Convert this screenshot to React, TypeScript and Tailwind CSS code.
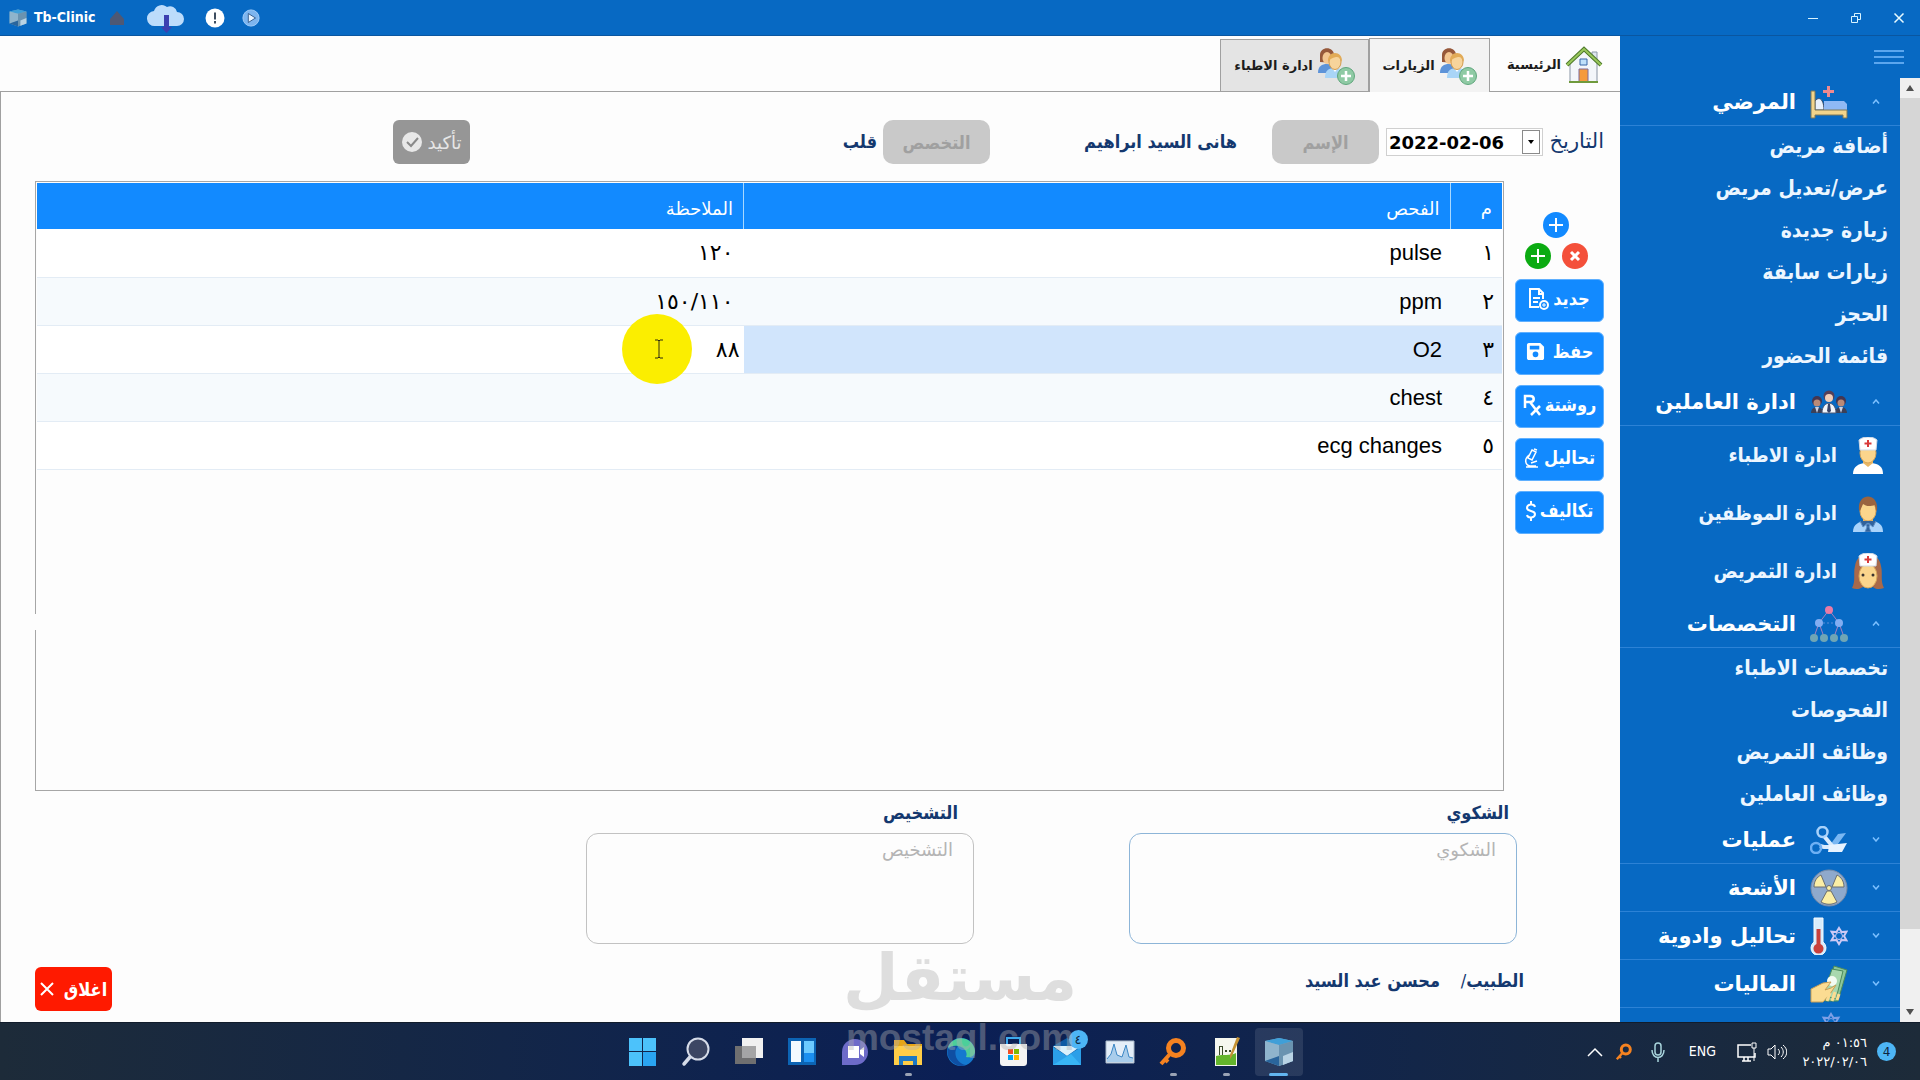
import React from "react";
import type { ReactNode } from "react";

const NARROW = "[font-family:'DejaVu_Sans_Condensed','DejaVu_Sans',sans-serif]";
const LABEL =
  "text-[18px] leading-7 font-bold text-[#14386f] whitespace-nowrap [font-family:'DejaVu_Sans_Condensed','DejaVu_Sans',sans-serif]";
const ACTION =
  "flex h-[43px] w-[89px] items-center justify-center gap-1 rounded-md border border-[#5fb0ff] bg-[#128aff] pb-1 text-[18px] font-bold text-white whitespace-nowrap [font-family:'DejaVu_Sans_Condensed','DejaVu_Sans',sans-serif]";

/* ---------- icons ---------- */

function CubeIcon({ className = "" }: { className?: string }) {
  return (
    <svg viewBox="0 0 30 30" className={className} aria-hidden="true">
      <path d="M1 4 15 1l14 3v20l-14 5-14-5z" fill="#6fa6c9" />
      <path d="M1 4 15 1l14 3-14 4z" fill="#3f9fd8" />
      <path d="M1 4 15 8v12L1 24z" fill="#8fb4cc" />
      <path d="M15 8 29 4v20l-14 5z" fill="#6a93b0" />
      <path d="m1 24 14-5v10z" fill="#2a659c" />
      <path d="m19 19 10-4v9l-10 4z" fill="#b9d3e4" />
    </svg>
  );
}

function CloudIcon() {
  return (
    <svg viewBox="0 0 38 32" className="h-8 w-[38px]" aria-hidden="true">
      <path d="M8 24a7.500 7.500 0 0 1-1-15A8 8 0 0 1 20 5a7 7 0 0 1 10 5 7 7 0 0 1 0 14z" fill="#bcdcfb" />
      <path d="M17 13h5v12h3l-5.500 6-5.500-6h3z" fill="#3c3fb0" />
    </svg>
  );
}

function HouseIcon() {
  return (
    <svg viewBox="0 0 38 38" className="size-[38px]" aria-hidden="true">
      <path d="M27 6h5v10h-5z" fill="#dfe6ef" stroke="#8c98a8" />
      <path d="M5 17 19 5l13 12v19H5z" fill="#f3f6fa" stroke="#8894a4" />
      <path d="m2 19 17-16 17 16" fill="none" stroke="#4f7a2c" strokeWidth="4" />
      <path d="m2 19 17-16 17 16" fill="none" stroke="#9ac85c" strokeWidth="2" />
      <path d="M15 13h7v6h-7z" fill="#bfe0fa" stroke="#3867a8" />
      <path d="M14 23h9v13h-9z" fill="#f59a3c" stroke="#7d6a9a" />
      <path d="M4 36h29" stroke="#6f9a3c" strokeWidth="2" />
    </svg>
  );
}

function UsersAddIcon() {
  return (
    <svg viewBox="0 0 38 38" className="size-[38px]" aria-hidden="true">
      <path d="M1 26c0-7 4-9 9-9s9 3 9 9z" fill="#5d93d8" />
      <path d="M3 15V8c0-9 14-9 14 0l1 8z" fill="#96583a" />
      <ellipse cx="10" cy="11" rx="4.500" ry="6" fill="#f3c691" />
      <path d="M8 31c0-8 4-10 10-10s10 3 10 10z" fill="#a9d5f7" />
      <path d="m15 21 3 4 3-4z" fill="#fff" />
      <ellipse cx="18" cy="15" rx="6" ry="7.500" fill="#f7d49b" stroke="#d29a4b" />
      <path d="M11 15c-1-12 15-12 14 0-2-4-3-5-6-5-4 1-6 2-8 5z" fill="#e2ab57" />
      <circle cx="29" cy="29" r="8.500" fill="#8fcaa4" stroke="#5fa67c" />
      <path d="M29 24v10M24 29h10" stroke="#fff" strokeWidth="2.500" />
    </svg>
  );
}

function BedIcon() {
  return (
    <svg viewBox="0 0 38 34" className="h-[34px] w-[38px]" aria-hidden="true">
      <path d="M17 1h3v4h4v3h-4v4h-3V8h-4V5h4z" fill="#ef8a8f" />
      <path d="M5 16c5-6 9 0 9 9H5z" fill="#e8f1fc" stroke="#3b4a66" />
      <path d="M14 16h20l3 3v6H14z" fill="#8fb9f5" />
      <path d="M1 6h4v19h32v8h-4v-3H5v3H1z" fill="#f2d48b" stroke="#7d7858" />
    </svg>
  );
}

function StaffIcon() {
  return (
    <svg viewBox="0 0 38 24" className="h-6 w-[38px]" aria-hidden="true">
      {[7, 31].map((x) => (
        <g key={x}>
          <circle cx={x} cy="11" r="5" fill="#453650" />
          <circle cx={x} cy="13" r="3.500" fill="#b98a78" />
          <path d={`M${x - 6} 23c0-8 12-8 12 0z`} fill="#3c4058" />
          <path d={`M${x - 2} 17h4l-2 6z`} fill="#c9d2e6" />
        </g>
      ))}
      <circle cx="19" cy="6" r="5.500" fill="#554059" />
      <circle cx="19" cy="8" r="4" fill="#f1cdb8" />
      <path d="M12 23c0-13 14-13 14 0z" fill="#f2f5fb" stroke="#4a5674" />
      <path d="m18 14 2 0 1 7-2 2-2-2z" fill="#3a4468" />
    </svg>
  );
}

function PersonIcon({ kind }: { kind: "doctor" | "clerk" | "nurse" }) {
  return (
    <svg viewBox="0 0 34 37" className="h-[37px] w-[34px]" aria-hidden="true">
      {kind === "nurse" && <path d="M1 35C5 28 2 20 4 13c2-16 24-16 26 0 2 7-1 15 3 22-5 2-9 1-11-1H12c-3 2-7 3-11 1z" fill="#a8694a" />}
      {kind !== "nurse" && (
        <path d="M2 37c0-8 6-10 11-11h8c6 1 11 3 11 11z" fill={kind === "doctor" ? "#ffffff" : "#a9d3fb"} />
      )}
      {kind !== "nurse" && <path d="M12 22h10v4l-5 4-5-4z" fill="#e9b765" />}
      <ellipse
        cx="17"
        cy={kind === "nurse" ? 23 : 16}
        rx={kind === "nurse" ? 9 : 8}
        ry={kind === "nurse" ? 12 : 10}
        fill="#fbd58c"
        stroke="#d9a75a"
      />
      {kind === "clerk" && <path d="M8 15C6-3 28-3 26 15l-1 1-1-6c-6 2-9 1-12-1l-3 7z" fill="#9a6440" />}
      {kind === "clerk" && <path d="M15 29h4l-1 3 2 5h-6l2-5zM9 26l3 6 5-4 5 4 3-6" fill="#32639c" stroke="#5d8fc7" />}
      {kind !== "clerk" && (
        <>
          <path d="M8 3C12-1 22-1 26 3l-1 10H9z" fill="#fff" stroke="#cfd9e6" />
          <path d="M17 3v7M13.500 6.500h7" stroke="#d93a3a" strokeWidth="2" />
        </>
      )}
      {kind === "nurse" && (
        <g fill="#3b3430">
          <circle cx="12" cy="22" r="1.500" />
          <circle cx="22" cy="22" r="1.500" />
        </g>
      )}
    </svg>
  );
}

function TreeIcon() {
  return (
    <svg viewBox="0 0 38 37" className="h-[37px] w-[38px]" aria-hidden="true">
      <path d="M19 5 9 18 4 32M9 18l5 14M19 5l10 13-5 14M29 18l5 14" fill="none" stroke="#a67fc0" />
      <path d="M13 18h12" stroke="#5d8fd8" strokeDasharray="2 2" />
      <circle cx="19" cy="5" r="4" fill="#e97aa5" />
      <circle cx="9" cy="18" r="4" fill="#82aef2" />
      <circle cx="29" cy="18" r="4" fill="#82aef2" />
      {[4, 14, 24, 34].map((x) => (
        <circle key={x} cx={x} cy="33" r="4" fill="#6fa5b5" />
      ))}
    </svg>
  );
}

function ScissorsIcon() {
  return (
    <svg viewBox="0 0 38 28" className="h-7 w-[38px]" aria-hidden="true">
      <path d="m20 19 8-11 8-1-11 15z" fill="#7ab7f2" />
      <path d="m14 10 9 11h-9l-4-1" fill="none" stroke="#d9ebfd" strokeWidth="4" />
      <path d="m19 19 18-2-5 9H18z" fill="#e8f3ff" />
      <circle cx="12.500" cy="6" r="5" fill="none" stroke="#a8d2fb" strokeWidth="2.500" />
      <circle cx="6" cy="22" r="5" fill="none" stroke="#6eb0f4" strokeWidth="2.500" />
    </svg>
  );
}

function RadiationIcon() {
  return (
    <svg viewBox="0 0 38 38" className="size-[38px]" aria-hidden="true">
      <circle cx="19" cy="19" r="18" fill="#8fa9cc" stroke="#7a8ba6" />
      <g fill="#fbeea5" stroke="#6b6f70">
        <path d="M16 18H4C4 12 7 8 11 6z" />
        <path d="M22 18h12c0-6-3-10-7-12z" />
        <path d="m17 22-6 11c5 3 11 3 16 0l-6-11z" />
        <circle cx="19" cy="19" r="2.500" />
      </g>
    </svg>
  );
}

function Gear({ x, y, color }: { x: number; y: number; color: string }) {
  return (
    <g transform={`translate(${x} ${y})`} fill="none" stroke={color} strokeWidth="2">
      <path d="m0-8 2.500 4 5-.3-2.500 4.300 2.500 4.300-5-.3L0 8l-2.500-4-5 .3L-5 0l-2.500-4.300 5 .3z" />
      <circle r="3.500" strokeWidth="1" />
    </g>
  );
}

function ThermometerIcon() {
  return (
    <svg viewBox="0 0 38 38" className="size-[38px]" aria-hidden="true">
      <path d="M4 1h9v24a7.500 7.500 0 1 1-9 0z" fill="#d8ecfb" stroke="#f5fbff" />
      <path d="M6.500 12h4v15a5 5 0 1 1-4 0z" fill="#c8403d" />
      <Gear x={29} y={19} color="#cdc9f5" />
    </svg>
  );
}

function CashIcon() {
  return (
    <svg viewBox="0 0 38 38" className="size-[38px]" aria-hidden="true">
      <path d="m24 1 13 4-9 31H15z" fill="#8dc79a" stroke="#4b8a5a" />
      <path d="m22 4 11 2-7 28-13-4z" fill="#a9d8ae" stroke="#4b8a5a" />
      <circle cx="22" cy="16" r="5" fill="#f4fbf2" />
      <path d="M1 37V24l12-6 8-1-6 8 6-2 5-3-6 9-7 8z" fill="#fbdc92" stroke="#c79f56" />
      <path d="m17 36 3-8m2 8 3-9m2 8 2-6" stroke="#fbdc92" strokeWidth="3" />
    </svg>
  );
}

function KeyIcon({ className }: { className: string }) {
  return (
    <svg viewBox="0 0 30 30" className={className} aria-hidden="true" fill="none" stroke="#f58220" strokeWidth="5">
      <circle cx="18" cy="11" r="7.500" />
      <path d="m12 17-9 10M6 21l4 4" strokeWidth="4" />
    </svg>
  );
}

/* ---------- sidebar ---------- */

function Section({ label, icon, open = false }: { label: string; icon: ReactNode; open?: boolean }) {
  return (
    <button className="flex h-12 w-full shrink-0 items-center border-b border-[#2c82d6] pr-5 text-white">
      <svg viewBox="0 0 8 5" className="w-2" aria-hidden="true" fill="none" stroke="#7cc0ff" strokeWidth="1.500">
        <path d={open ? "M1 4.500 4 1l3 3.500" : "M1 .5 4 4l3-3.500"} />
      </svg>
      <span className="mr-6 flex w-[38px] justify-center">{icon}</span>
      <span className="mr-3.5 pt-0.5 text-[21px] font-bold whitespace-nowrap">{label}</span>
    </button>
  );
}

function NavLink({ label, icon }: { label: string; icon?: ReactNode }) {
  return (
    <a
      href="#"
      className={
        icon
          ? "flex h-[58px] shrink-0 items-center gap-3.5 pr-[15px] text-[20px] font-bold text-[#ecf6ff] whitespace-nowrap [font-family:'DejaVu_Sans_Condensed','DejaVu_Sans',sans-serif]"
          : "flex h-[42px] shrink-0 items-center pr-3 text-[21px] font-bold text-[#ecf6ff] whitespace-nowrap [font-family:'DejaVu_Sans_Condensed','DejaVu_Sans',sans-serif]"
      }
    >
      {icon}
      <span>{label}</span>
    </a>
  );
}

function Sidebar() {
  return (
    <aside dir="rtl" className="flex w-[300px] shrink-0 flex-col bg-[#0769c3]">
      <div className="flex h-[42px] shrink-0 items-center pr-4">
        <button aria-label="القائمة" className="flex w-[30px] flex-col gap-1">
          <span className="h-0.5 bg-[#5ba6ee]" />
          <span className="h-0.5 bg-[#5ba6ee]" />
          <span className="h-0.5 bg-[#5ba6ee]" />
        </button>
      </div>
      <div className="flex min-h-0 flex-1">
        <div className="flex w-5 shrink-0 flex-col bg-[#f0f0f0]">
          <span className="flex h-5 items-center justify-center">
            <svg viewBox="0 0 8 6" className="w-2" aria-hidden="true"><path d="M0 6 4 0l4 6z" fill="#505050" /></svg>
          </span>
          <span className="h-[88%] bg-[#d6d6d6]" />
          <span className="mt-auto flex h-5 items-center justify-center">
            <svg viewBox="0 0 8 6" className="w-2" aria-hidden="true"><path d="M0 0h8L4 6z" fill="#505050" /></svg>
          </span>
        </div>
        <nav className="flex min-h-0 flex-1 flex-col overflow-hidden">
          <Section open label="المرضي" icon={<BedIcon />} />
          <NavLink label="أضافة مريض" />
          <NavLink label="عرض/تعديل مريض" />
          <NavLink label="زيارة جديدة" />
          <NavLink label="زيارات سابقة" />
          <NavLink label="الحجز" />
          <NavLink label="قائمة الحضور" />
          <Section open label="ادارة العاملين" icon={<StaffIcon />} />
          <NavLink label="ادارة الاطباء" icon={<PersonIcon kind="doctor" />} />
          <NavLink label="ادارة الموظفين" icon={<PersonIcon kind="clerk" />} />
          <NavLink label="ادارة التمريض" icon={<PersonIcon kind="nurse" />} />
          <Section open label="التخصصات" icon={<TreeIcon />} />
          <NavLink label="تخصصات الاطباء" />
          <NavLink label="الفحوصات" />
          <NavLink label="وظائف التمريض" />
          <NavLink label="وظائف العاملين" />
          <Section label="عمليات" icon={<ScissorsIcon />} />
          <Section label="الأشعة" icon={<RadiationIcon />} />
          <Section label="تحاليل وادوية" icon={<ThermometerIcon />} />
          <Section label="الماليات" icon={<CashIcon />} />
          <svg viewBox="0 0 24 20" className="mt-1 mr-[57px] h-5 w-6 shrink-0" aria-hidden="true">
            <Gear x={12} y={10} color="#7d9fe6" />
          </svg>
        </nav>
      </div>
    </aside>
  );
}

/* ---------- title bar ---------- */

function TitleBar() {
  return (
    <header className="flex h-9 shrink-0 items-center border-b border-[#0a56a0] bg-[#0769c3] px-2 text-white">
      <CubeIcon className="h-[18px] w-5" />
      <span className={NARROW + " ml-1.5 text-[14px] font-bold"}>Tb-Clinic</span>
      <svg viewBox="0 0 16 16" className="ml-3.5 size-4" aria-hidden="true">
        <path d="M1 9 8 1l7 8v6H1z" fill="#4e5874" />
      </svg>
      <span className="ml-[22px]"><CloudIcon /></span>
      <svg viewBox="0 0 20 20" className="ml-5 size-5" aria-hidden="true">
        <circle cx="10" cy="10" r="9.500" fill="#fff" />
        <path d="M10 4.500v7M10 13v2.500" stroke="#3d4d60" strokeWidth="2" />
      </svg>
      <svg viewBox="0 0 20 20" className="ml-[17px] size-[18px]" aria-hidden="true">
        <circle cx="10" cy="10" r="9" fill="#7db5ef" stroke="#a5cffa" />
        <path d="m7 5 8 5-8 5z" fill="#eaf5ff" stroke="#2c5688" />
      </svg>
      <div className="ml-auto flex items-center gap-[31px] pr-[7px]">
        <button aria-label="Minimize">
          <svg viewBox="0 0 12 12" className="size-3" stroke="#d8f4ff" fill="none"><path d="M1 6.500h10" /></svg>
        </button>
        <button aria-label="Restore">
          <svg viewBox="0 0 12 12" className="size-3" stroke="#d8f4ff" fill="none"><path d="M1.500 4.500h6v6h-6zM4.500 4.500v-3h6v6h-3" /></svg>
        </button>
        <button aria-label="Close">
          <svg viewBox="0 0 12 12" className="size-3" stroke="#e8fbff" strokeWidth="1.500" fill="none"><path d="m1.500 1.500 9 9m0-9-9 9" /></svg>
        </button>
      </div>
    </header>
  );
}

/* ---------- main area ---------- */

const rows = [
  { n: "١", exam: "pulse", note: "١٢٠" },
  { n: "٢", exam: "ppm", note: "١٥٠/١١٠" },
  { n: "٣", exam: "O2", note: "٨٨" },
  { n: "٤", exam: "chest", note: "" },
  { n: "٥", exam: "ecg changes", note: "" },
];

function ExamTable() {
  return (
    <table className="w-full table-fixed border-collapse text-right">
      <colgroup>
        <col className="w-[52px]" />
        <col />
        <col />
      </colgroup>
      <thead>
        <tr className="h-[46px] bg-[#128aff] text-[18px] text-white">
          <th className="border-l border-[#a8d8ff] pt-1 pr-2.5 font-normal">م</th>
          <th className="border-l border-[#a8d8ff] pt-1 pr-2.5 font-normal">الفحص</th>
          <th className="pt-1 pr-2.5 font-normal">الملاحظة</th>
        </tr>
      </thead>
      <tbody>
        {rows.map((r, i) => (
          <tr
            key={r.exam}
            className={
              i === 2
                ? "h-12 border-b border-[#e3ecf5] bg-[#d1e5fc] text-[22px]"
                : i % 2
                  ? "h-12 border-b border-[#e3ecf5] bg-[#f6fafd] text-[22px]"
                  : "h-12 border-b border-[#e3ecf5] bg-white text-[22px]"
            }
          >
            <td className="pr-2">{r.n}</td>
            <td className="pr-2 [font-family:'Liberation_Sans',sans-serif]"><bdi>{r.exam}</bdi></td>
            <td className={i === 2 ? "bg-white pr-1" : "pr-2.5"}>
              {i === 2 ? (
                <span className="relative flex items-center">
                  <bdi>{r.note}</bdi>
                  <span className="absolute right-12 flex size-[70px] items-center justify-center rounded-full bg-[#fbee00]">
                    <svg viewBox="0 0 10 20" className="mr-[-4px] h-5 w-2.5" fill="none" stroke="#2c2a10" aria-hidden="true">
                      <path d="M1 1h3l1 1 1-1h3M5 2v16M1 19h3l1-1 1 1h3" />
                    </svg>
                  </span>
                </span>
              ) : (
                <bdi dir="ltr">{r.note}</bdi>
              )}
            </td>
          </tr>
        ))}
      </tbody>
    </table>
  );
}

function Actions() {
  return (
    <div className="flex w-[89px] shrink-0 flex-col items-center pt-[31px]">
      <div className="flex flex-col items-center pr-[7px]">
        <button aria-label="إضافة" className="size-[26px]">
          <svg viewBox="0 0 26 26"><circle cx="13" cy="13" r="13" fill="#128aff" /><path d="M13 6v14M6 13h14" stroke="#fff" strokeWidth="2" /></svg>
        </button>
        <div className="mt-[5px] mb-[10px] flex gap-[11px]">
          <button aria-label="حذف" className="size-[26px]">
            <svg viewBox="0 0 26 26"><circle cx="13" cy="13" r="13" fill="#f4503a" /><path d="m9 9 8 8m0-8-8 8" stroke="#fff" strokeWidth="3" /></svg>
          </button>
          <button aria-label="إضافة فحص" className="size-[26px]">
            <svg viewBox="0 0 26 26"><circle cx="13" cy="13" r="13" fill="#0bab12" /><path d="M13 6v14M6 13h14" stroke="#fff" strokeWidth="2" /></svg>
          </button>
        </div>
      </div>
      <div className="flex flex-col gap-[10px]">
        <button className={ACTION}>
          <span>جديد</span>
          <svg viewBox="0 0 20 22" className="h-[22px] w-5" fill="none" stroke="#fff" strokeWidth="2" aria-hidden="true">
            <path d="M10 19H1V1h9l4 4v6M10 1v5h4M4 10h7M4 14h5" />
            <circle cx="15" cy="17" r="4" />
            <path d="M15 15v4m-2-2h4" strokeWidth="1" />
          </svg>
        </button>
        <button className={ACTION}>
          <span>حفظ</span>
          <svg viewBox="0 0 20 20" className="mr-1 size-[19px]" aria-hidden="true">
            <path d="M1 3c0-1 1-2 2-2h12l4 4v12c0 1-1 2-2 2H3c-1 0-2-1-2-2zm3 1v4h10V4zm6 6a3 3 0 1 0 0 6 3 3 0 0 0 0-6z" fill="#fff" fillRule="evenodd" />
          </svg>
        </button>
        <button className={ACTION}>
          <span>روشتة</span>
          <svg viewBox="0 0 18 22" className="h-[22px] w-[18px] shrink-0" fill="none" stroke="#fff" strokeWidth="2.500" aria-hidden="true">
            <path d="M2 14V2h5c5 0 5 6 0 6H2M7 8l10 13M17 12 8 21" />
          </svg>
        </button>
        <button className={ACTION}>
          <span>تحاليل</span>
          <svg viewBox="0 0 16 20" className="h-5 w-4 shrink-0" fill="none" stroke="#fff" strokeWidth="1.500" aria-hidden="true">
            <path d="m8 2 4 2-4 8-4-2zM10 1l3 1M5 7c-5 4-4 10 1 11h6M2 19h12M7 15l6-2" />
          </svg>
        </button>
        <button className={ACTION}>
          <span>تكاليف</span>
          <svg viewBox="0 0 10 20" className="h-5 w-2.5 shrink-0" fill="none" stroke="#fff" strokeWidth="2" aria-hidden="true">
            <path d="M9 6C8 2 1 3 1 7c0 4 8 2 8 6 0 4-7 5-8 1M5 0v4M5 16v4" />
          </svg>
        </button>
      </div>
    </div>
  );
}

function Main() {
  return (
    <main dir="rtl" className="flex min-w-0 flex-1 flex-col bg-[#fdfdfd]">
      <div role="tablist" className="flex h-14 shrink-0 items-end border-b border-[#a0a0a0] text-[13px] font-bold text-[#1c1c1c] whitespace-nowrap">
        <button role="tab" className="flex h-[53px] w-[130px] items-center justify-center gap-1"><HouseIcon />الرئيسية</button>
        <button role="tab" className="-mb-px flex h-[54px] w-[121px] items-center justify-center gap-1 border border-b-0 border-[#a0a0a0] bg-[#f3f3f3]"><UsersAddIcon />الزيارات</button>
        <button role="tab" className="flex h-[52px] w-[149px] items-center justify-center gap-1 border border-b-0 border-[#a0a0a0] bg-[#e4e4e4]"><UsersAddIcon />ادارة الاطباء</button>
      </div>

      <div className="flex min-h-0 flex-1 flex-col border-l border-[#a0a0a0] pt-7">
        <div className="flex h-11 shrink-0 items-center pr-4 whitespace-nowrap">
          <label htmlFor="visit-date" className="w-[61px] text-[21px] text-[#14386f]">التاريخ</label>
          <div dir="ltr" className="flex h-7 w-[157px] items-center border border-[#d0d0d0] bg-white pr-0.5">
            <input id="visit-date" defaultValue="2022-02-06" className="min-w-0 flex-1 pl-0.5 text-[18px] font-bold text-black outline-none" />
            <button aria-label="اختيار التاريخ" className="flex h-6 w-[18px] items-center justify-center border border-[#8a8a8a]">
              <svg viewBox="0 0 6 4" className="w-1.5" aria-hidden="true"><path d="M0 0h6L3 4z" fill="#000" /></svg>
            </button>
          </div>
          <button disabled className={NARROW + " mr-[7px] h-11 w-[107px] rounded-[10px] bg-[#c9c9c9] text-[18px] font-bold text-[#a0a0a0]"}>الإسم</button>
          <span className={LABEL + " mr-[35px] w-[247px]"}>هانى السيد ابراهيم</span>
          <button disabled className={NARROW + " h-11 w-[107px] rounded-[10px] bg-[#c9c9c9] text-[18px] font-bold text-[#a0a0a0]"}>التخصص</button>
          <span className={LABEL + " mr-1.5"}>قلب</span>
          <button disabled className="mr-auto ml-[392px] flex h-11 w-[77px] items-center justify-center gap-1.5 rounded-md bg-[#969696] text-[18px] text-[#e6e6e6]">
            تأكيد
            <svg viewBox="0 0 20 20" className="size-5" aria-hidden="true">
              <circle cx="10" cy="10" r="10" fill="#e8e8e8" />
              <path d="m5 10 4 4 7-8" fill="none" stroke="#8a8a8a" strokeWidth="2" />
            </svg>
          </button>
        </div>

        <div className="mt-[17px] flex min-h-0 flex-1 gap-[11px] pr-4 pl-[34px]">
          <Actions />
          <div className="relative min-w-0 flex-1 border border-[#a6a6a6] bg-[#fdfdfd] p-px">
            <ExamTable />
            <span className="absolute top-[71%] -left-px h-4 w-px bg-[#fdfdfd]" />
          </div>
        </div>

        <div className="mt-2 flex shrink-0 gap-[155px] pr-[103px]">
          <div className="flex w-[388px] flex-col">
            <label htmlFor="complaint" className={LABEL + " pr-2"}>الشكوي</label>
            <textarea id="complaint" placeholder="الشكوي" className="mt-1.5 h-[111px] resize-none rounded-xl border border-[#8db5d8] px-5 py-0.5 text-[18px] outline-none placeholder:text-[#b4b4b4]" />
          </div>
          <div className="flex w-[388px] flex-col">
            <label htmlFor="diagnosis" className={LABEL + " pr-4"}>التشخيص</label>
            <textarea id="diagnosis" placeholder="التشخيص" className="mt-1.5 h-[111px] resize-none rounded-xl border border-[#c2c2c2] px-5 py-0.5 text-[18px] outline-none placeholder:text-[#b4b4b4]" />
          </div>
        </div>

        <div className="flex h-[78px] shrink-0 items-center pr-24 pl-[34px]">
          <p className={LABEL + " w-[84px] pb-1"}>الطبيب<span className="font-normal">/</span></p>
          <p className={LABEL + " pb-1"}>محسن عبد السيد</p>
          <button className={NARROW + " mt-3 mr-auto flex h-11 w-[77px] items-center justify-center gap-2.5 rounded-md bg-[#ff1a00] text-[18px] font-bold text-white whitespace-nowrap"}>
            اغلاق
            <svg viewBox="0 0 14 14" className="size-3.5 shrink-0" stroke="#fff" strokeWidth="2" aria-hidden="true"><path d="m1 1 12 12m0-12L1 13" /></svg>
          </button>
        </div>
      </div>
    </main>
  );
}

/* ---------- taskbar ---------- */

function Task({ label, children, state = "" }: { label: string; children: ReactNode; state?: "" | "running" | "active" }) {
  return (
    <button
      aria-label={label}
      className={
        state === "active"
          ? "relative mx-0.5 flex h-12 w-12 items-center justify-center rounded bg-white/10"
          : "relative flex h-12 w-[53px] items-center justify-center"
      }
    >
      {children}
      {state !== "" && (
        <span
          className={
            state === "active"
              ? "absolute bottom-0 h-[3px] w-[19px] rounded-full bg-[#62b5f0]"
              : "absolute bottom-0 h-[3px] w-[7px] rounded-full bg-[#9aa3b5]"
          }
        />
      )}
    </button>
  );
}

const T = "size-[30px]";

function Taskbar() {
  return (
    <footer dir="ltr" className="grid h-[58px] shrink-0 grid-cols-[1fr_auto_1fr] items-center border-t border-[#111c2b] bg-linear-to-r from-[#1d2b39] via-[#0b1f55] to-[#1d2b39]">
      <span />
      <div className="flex pl-px">
        <Task label="Start">
          <svg viewBox="0 0 30 30" className={T}><path d="M1 1h13v13H1zM15 1h13v13H15zM1 15h13v14H1zM15 15h13v14H15z" fill="#4cc2fb" /><path d="M15 15h13v14H15z" fill="#2aa5f2" /></svg>
        </Task>
        <Task label="Search">
          <svg viewBox="0 0 30 30" className={T}><circle cx="17" cy="12" r="10.500" fill="#3c4663" stroke="#d5dbe8" strokeWidth="2" /><path d="m9 20-6 7" stroke="#d5dbe8" strokeWidth="3.500" strokeLinecap="round" /></svg>
        </Task>
        <Task label="Task view">
          <svg viewBox="0 0 30 30" className={T}><path d="M8 1h21v20H8z" fill="#f1f1f1" /><path d="M1 9h21v18H1z" fill="#6f6f70" /><path d="M8 9h14v12H8z" fill="#a5a5a6" /></svg>
        </Task>
        <Task label="Widgets">
          <svg viewBox="0 0 30 30" className={T}><path d="M1 1h28v27H1z" fill="#0c64b4" /><path d="M4 4h10v21H4z" fill="#f3fbff" /><path d="M17 4h10v12H17z" fill="#6ccaff" /><path d="M17 16h10v9H17z" fill="#1b8ff0" /></svg>
        </Task>
        <Task label="Chat">
          <svg viewBox="0 0 30 30" className={T}><path d="M2 28V15A13 13 0 1 1 15 28z" fill="#6d6bc9" /><path d="M8 9h11v12H8zM20 13l4-3v10l-4-3z" fill="#fff" /></svg>
        </Task>
        <Task label="File Explorer" state="running">
          <svg viewBox="0 0 30 30" className={T}><path d="M1 3h10l3 4h15v21H1z" fill="#e6a417" /><path d="M1 9h28v19H1z" fill="#ffcd47" /><path d="M6 19h18v9H6z" fill="#1d78c4" /><path d="M10 24h10v4H10z" fill="#ffcd47" /></svg>
        </Task>
        <Task label="Edge">
          <svg viewBox="0 0 30 30" className={T}>
            <circle cx="15" cy="15" r="14" fill="#1479cf" />
            <path d="M2 11C6-3 27-2 29 14c0 5-4 7-9 6 2-4-1-10-8-11-4 0-7 0-10 2z" fill="#4ccf9a" />
            <path d="M12 9c-6 7-1 18 8 19-9 4-21-6-18-16 3-3 6-4 10-3z" fill="#0f4fa3" />
          </svg>
        </Task>
        <Task label="Microsoft Store">
          <svg viewBox="0 0 30 30" className={T}><path d="M8 9V1h13v8" fill="none" stroke="#3da9ec" strokeWidth="2" /><path d="M1 7h27v18c0 3-1 4-4 4H5c-3 0-4-1-4-4z" fill="#f4f4f4" /><path d="M9 12h5v5H9z" fill="#f25022" /><path d="M15 12h5v5h-5z" fill="#7fba00" /><path d="M9 18h5v5H9z" fill="#00a4ef" /><path d="M15 18h5v5h-5z" fill="#ffb900" /></svg>
        </Task>
        <Task label="Mail">
          <svg viewBox="0 0 30 30" className={T}><path d="M1 9 15 1l14 8v19H1z" fill="#0c59a4" /><path d="M1 9h28l-14 10z" fill="#d9f0fc" /><path d="M1 10l14 9 14-9v18H1z" fill="#2b9fe8" /><path d="m1 28 18-11 10 11z" fill="#38b5f5" /></svg>
          <span className="absolute top-0.5 right-1.5 flex size-[19px] items-center justify-center rounded-full bg-[#4db5f5] text-[13px] leading-none text-[#0d2540]">٤</span>
        </Task>
        <Task label="Monitor">
          <svg viewBox="0 0 30 30" className={T}><path d="M1 4h28v22H1z" fill="#e4eef8" stroke="#a9b8c8" /><path d="M2 22l4-5 3-10 3 11 5 2 4-12 3 12 4 1v4H2z" fill="#a9cdeb" /><path d="m2 22 4-5 3-10 3 11 5 2 4-12 3 12 4 1" fill="none" stroke="#3b86c4" /></svg>
        </Task>
        <Task label="Everything" state="running"><KeyIcon className={T} /></Task>
        <Task label="Notes" state="running">
          <svg viewBox="0 0 30 30" className={T}><path d="M4 1h22v28H4z" fill="#f5f7ef" /><path d="M5 19c7-2 14 0 20-3v12H5z" fill="#64b52c" /><path d="M8 9h4v9h-1v-8H9v8H8zM14 13h2v2h-2zM18 13h2v2h-2z" fill="#3b4a2a" /><path d="m29 1-8 18-2 3 0-4L26 0z" fill="#c49234" /></svg>
        </Task>
        <Task label="Tb-Clinic" state="active"><CubeIcon className={T} /></Task>
      </div>
      <div className="flex items-center justify-end pr-6 text-white">
        <svg viewBox="0 0 16 10" className="w-4" fill="none" stroke="#fff" strokeWidth="1.500" aria-hidden="true"><path d="m1 9 7-7 7 7" /></svg>
        <KeyIcon className="ml-3 size-[18px]" />
        <svg viewBox="0 0 14 20" className="ml-[18px] h-5 w-3.5" fill="none" stroke="#a8d4dc" strokeWidth="1.500" aria-hidden="true"><rect x="4" y="1" width="6" height="12" rx="3" /><path d="M1 8c0 10 12 10 12 0M7 16v4" /></svg>
        <span className={NARROW + " ml-6 text-[14px]"}>ENG</span>
        <svg viewBox="0 0 20 20" className="ml-[21px] size-5" fill="none" stroke="#fff" aria-hidden="true"><path d="M14 3H1v12h17v-4M5 19h9M7 15v4M11 15v4" strokeWidth="1.500" /><path d="M15 1h4v5h-4zM17 6v13" /></svg>
        <svg viewBox="0 0 20 16" className="ml-2.5 h-4 w-5" fill="none" stroke="#fff" aria-hidden="true"><path d="M1 5h3l4-4v14l-4-4H1zM11 5c2 2 2 4 0 6M14 3c3 3 3 7 0 10M16 1c5 4 5 10 0 14" /></svg>
        <div dir="rtl" className="ml-3.5 w-[66px] text-right text-[13px] leading-[19px] whitespace-nowrap">
          <div>٠١:٥٦ م</div>
          <div><bdi dir="ltr">٢٠٢٢/٠٢/٠٦</bdi></div>
        </div>
        <span className="ml-2.5 flex size-[19px] shrink-0 items-center justify-center rounded-full bg-[#4db5f5] text-[12px] text-[#0d2540]">4</span>
      </div>
    </footer>
  );
}

export default function App() {
  return (
    <div className="relative flex h-screen flex-col overflow-hidden bg-[#0769c3] text-black [font-family:'DejaVu_Sans',sans-serif]">
      <TitleBar />
      <div className="flex min-h-0 flex-1">
        <Main />
        <Sidebar />
      </div>
      <Taskbar />
      <div dir="rtl" className="pointer-events-none absolute bottom-5 left-1/2 flex w-[240px] -translate-x-1/2 flex-col items-center text-[#b0b0b0] opacity-40">
        <span className="text-[64px] leading-[75px] font-bold">مستقل</span>
        <span className="text-[37px] leading-[44px] font-bold [font-family:'Liberation_Sans',sans-serif]">mostaql.com</span>
      </div>
    </div>
  );
}
